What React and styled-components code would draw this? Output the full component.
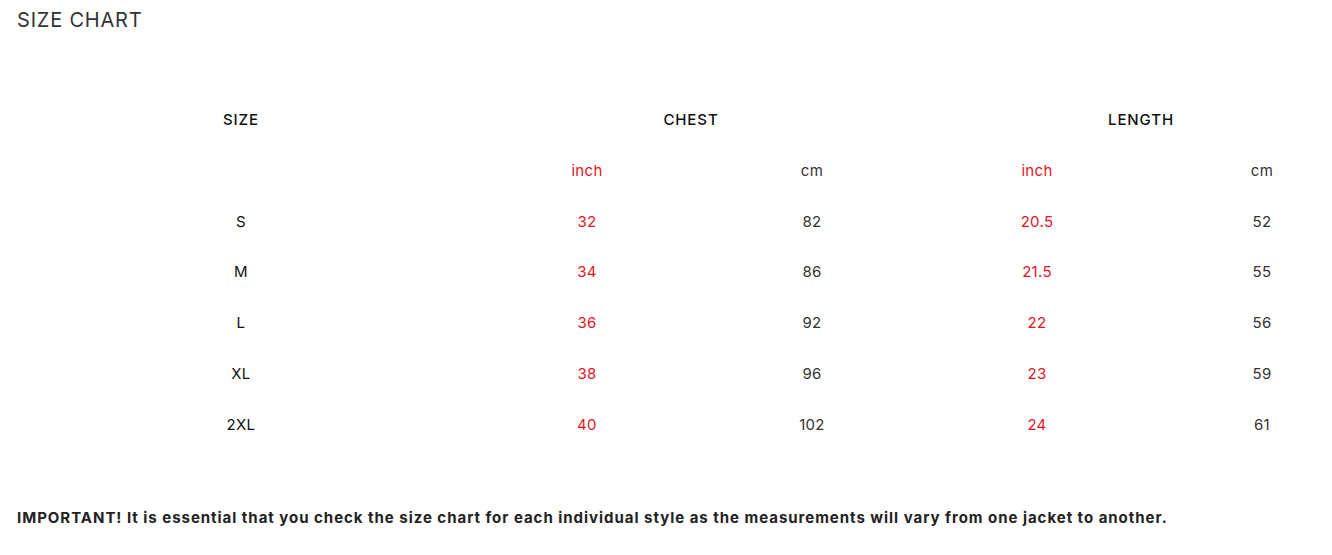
import React from "react";
import styled, { createGlobalStyle } from "styled-components";

const Global = createGlobalStyle`
  html, body { margin: 0; padding: 0; background: #fff; overflow: hidden; }
  body { font-family: Inter, "Open Sans", sans-serif; color: #222; }
`;

const Page = styled.div`
  width: 1332px;
  height: 555px;
  overflow: hidden;
`;

const Title = styled.h2`
  margin: 0;
  padding: 8px 0 0 17px;
  font-size: 20px;
  line-height: 24px;
  font-weight: 400;
  color: #333;
  letter-spacing: 0.8px;
`;

const Chart = styled.div`
  margin-top: 62px;
  margin-left: 16px;
  display: grid;
  grid-template-columns: 450px repeat(4, 225px);
  grid-auto-rows: 50.85px;
  align-items: center;
`;

const Head = styled.div`
  grid-column: ${(p) => (p.$span ? `span ${p.$span}` : "span 1")};
  text-align: center;
  font-size: 15px;
  font-weight: 500;
  color: #111;
  text-transform: uppercase;
  letter-spacing: 0.9px;
`;

const Cell = styled.div`
  text-align: center;
  font-size: 15px;
  font-weight: 400;
  letter-spacing: 0.3px;
  color: ${(p) => (p.$red ? "#e3151f" : p.$size ? "#111" : "#333")};
  padding-left: ${(p) => (p.$size ? "0" : "17px")};
`;

const Note = styled.p`
  margin: 57px 0 0 17px;
  font-size: 15px;
  line-height: 22px;
  font-weight: 700;
  color: #222;
  letter-spacing: 0.97px;
  white-space: nowrap;
`;

const rows = [
  ["S", "32", "82", "20.5", "52"],
  ["M", "34", "86", "21.5", "55"],
  ["L", "36", "92", "22", "56"],
  ["XL", "38", "96", "23", "59"],
  ["2XL", "40", "102", "24", "61"],
];

export default function App() {
  return (
    <Page>
      <Global />
      <Title>SIZE CHART</Title>
      <Chart>
        <Head>Size</Head>
        <Head $span={2}>Chest</Head>
        <Head $span={2}>Length</Head>
        <Cell $size />
        <Cell $red>inch</Cell>
        <Cell>cm</Cell>
        <Cell $red>inch</Cell>
        <Cell>cm</Cell>
        {rows.map((r) => (
          <React.Fragment key={r[0]}>
            <Cell $size>{r[0]}</Cell>
            <Cell $red>{r[1]}</Cell>
            <Cell>{r[2]}</Cell>
            <Cell $red>{r[3]}</Cell>
            <Cell>{r[4]}</Cell>
          </React.Fragment>
        ))}
      </Chart>
      <Note>
        IMPORTANT! It is essential that you check the size chart for each individual style as the measurements will vary from one jacket to another.
      </Note>
    </Page>
  );
}
